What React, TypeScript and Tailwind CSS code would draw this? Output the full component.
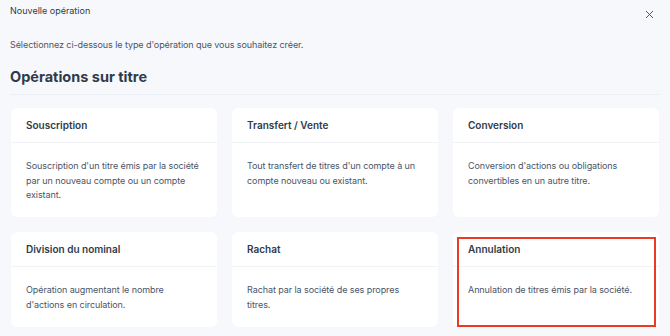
import { X } from "lucide-react";

const operations = [
  {
    title: "Souscription",
    text: "Souscription d'un titre émis par la société par un nouveau compte ou un compte existant.",
  },
  {
    title: "Transfert / Vente",
    text: "Tout transfert de titres d'un compte à un compte nouveau ou existant.",
  },
  {
    title: "Conversion",
    text: "Conversion d'actions ou obligations convertibles en un autre titre.",
  },
  {
    title: "Division du nominal",
    text: "Opération augmentant le nombre d'actions en circulation.",
  },
  {
    title: "Rachat",
    text: "Rachat par la société de ses propres titres.",
  },
  {
    title: "Annulation",
    text: "Annulation de titres émis par la société.",
    highlighted: true,
  },
];

function OperationCard({
  title,
  text,
  highlighted,
  tall,
}: {
  title: string;
  text: string;
  highlighted?: boolean;
  tall?: boolean;
}) {
  return (
    <div
      className={`relative bg-white rounded-md flex flex-col ${
        tall ? "h-[109px]" : "h-[95px]"
      }`}
    >
      <div className="h-[35px] px-[15px] flex items-center border-b border-[#f1f3f6]">
        <h3 className="text-[10px] font-semibold text-[#2f3b4a]">{title}</h3>
      </div>
      <p className="px-[15px] pt-[16px] text-[9px] tracking-[-0.08px] leading-[14.5px] text-[#4a5568]">
        {text}
      </p>
      {highlighted && (
        <div className="absolute left-[4px] right-[3px] top-[5px] bottom-0 border-2 border-[#ea3c24]" />
      )}
    </div>
  );
}

export default function App() {
  return (
    <div
      className="w-[670px] h-[336px] overflow-hidden bg-[#f7f8fb] px-[10px]"
      style={{ fontFamily: "Inter, 'Noto Sans', sans-serif" }}
    >
      {/* Header */}
      <div className="h-[18px] pt-[4px] flex items-start justify-between">
        <h1 className="text-[9px] leading-[14px] text-[#2f3b4a]">Nouvelle opération</h1>
        <button className="mt-[4px] mr-[4px] text-[#4a5568]">
          <X size={13} strokeWidth={1.8} />
        </button>
      </div>

      <p className="mt-[20px] text-[9px] tracking-[-0.08px] leading-[14px] text-[#4a5568]">
        Sélectionnez ci-dessous le type d'opération que vous souhaitez créer.
      </p>

      <h2 className="mt-[15px] text-[14.5px] leading-[20px] font-bold text-[#2f3b4a] pb-[7px] border-b border-[#eceff3]">
        Opérations sur titre
      </h2>

      {/* Cards */}
      <div className="mt-[13px] grid grid-cols-3 gap-[15px] px-[1px]">
        {operations.map((op, i) => (
          <OperationCard
            key={op.title}
            title={op.title}
            text={op.text}
            highlighted={op.highlighted}
            tall={i < 3}
          />
        ))}
      </div>
    </div>
  );
}
